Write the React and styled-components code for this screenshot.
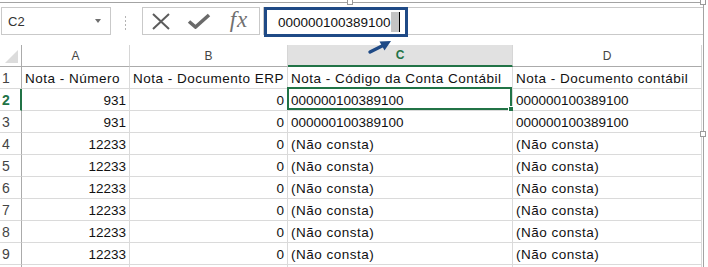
import React from "react";
import styled, { createGlobalStyle, css } from "styled-components";

const GREEN = "#217346";
const BLUE = "#1f4a86";

const Global = createGlobalStyle`
  html, body { margin: 0; padding: 0; background: #fff; overflow: hidden; }
  body { font-family: "Liberation Sans", Arial, sans-serif; }
  * { box-sizing: border-box; }
`;

const Frame = styled.div`
  position: relative;
  margin-top: 2px;
  width: 704px;
  height: 265px;
  border-top: 1px solid #a3a3a3;
  border-right: 1px solid #a3a3a3;
`;

const Handle = styled.span`
  position: absolute;
  z-index: 3;
  width: 6px;
  height: 6px;
  background: #fff;
  border: 1px solid #9a9a9a;
  left: ${(p) => p.$x}px;
  top: ${(p) => p.$y}px;
`;

const Toolbar = styled.div`
  position: relative;
  z-index: 2;
  height: 42px;
  display: flex;
  align-items: flex-start;
  padding: 4px 0 0 1px;
`;

const NameBox = styled.div`
  width: 110px;
  height: 28px;
  border: 1px solid #c9c9c9;
  display: flex;
  align-items: center;
  padding-left: 6px;
  font-size: 13px;
  color: #333;
`;

const NameText = styled.span`
  flex: 1;
`;

const DropArrow = styled.span`
  width: 0;
  height: 0;
  margin-right: 9px;
  border-left: 3.5px solid transparent;
  border-right: 3.5px solid transparent;
  border-top: 4px solid #6f6f6f;
`;

const Dots = styled.span`
  margin: 9px 0 0 14px;
  width: 1px;
  height: 14px;
  background: repeating-linear-gradient(
    to bottom,
    #b4b4b4 0 2px,
    transparent 2px 4px
  );
`;

const FxGroup = styled.div`
  margin-left: 16px;
  width: 118px;
  height: 28px;
  border: 1px solid #c9c9c9;
  display: grid;
  grid-template-columns: 36px 40px 40px;
  align-items: center;
  justify-items: center;
`;

const FxText = styled.span`
  font-family: "Liberation Serif", "Times New Roman", serif;
  font-style: italic;
  font-size: 23px;
  color: #707070;
  letter-spacing: 1px;
  line-height: 26px;
  margin-top: -2px;
`;

const FormulaBar = styled.div`
  position: relative;
  flex: 1;
  margin-left: 3px;
  height: 28px;
  border-top: 1px solid #c9c9c9;
  border-bottom: 1px solid #c9c9c9;
  border-left: 1px solid #c9c9c9;
`;

const Callout = styled.div`
  position: absolute;
  left: 0;
  top: -1px;
  width: 144px;
  height: 30px;
  border: 3px solid ${BLUE};
  background: #fff;
  display: flex;
  align-items: center;
  padding-left: 11px;
  font-size: 13.5px;
  line-height: 15px;
  color: #111;
`;

const SelBlock = styled.span`
  width: 8px;
  height: 20px;
  margin-left: 0;
  background: #c4c4c4;
`;

const Caret = styled.span`
  width: 1px;
  height: 20px;
  background: #000;
`;

const Arrow = styled.svg`
  position: absolute;
  left: 362px;
  top: 33px;
  overflow: visible;
`;

const GridWrap = styled.div`
  position: relative;
  z-index: 1;
  height: 222px;
  overflow: hidden;
`;

const Grid = styled.div`
  display: grid;
  grid-template-columns: 22px 108px 158px 225px 189px;
  grid-auto-rows: 22px;
`;

const ColHead = styled.div`
  position: relative;
  display: flex;
  align-items: center;
  justify-content: center;
  font-size: 12px;
  line-height: 14px;
  color: #444;
  border-right: 1px solid #d6d6d6;
  border-bottom: 1px solid #ababab;
  ${(p) =>
    p.$active &&
    css`
      background: #e1e1e1;
      color: ${GREEN};
      font-weight: bold;
      border-bottom: 2px solid ${GREEN};
    `}
  ${(p) =>
    p.$corner &&
    css`
      border-right: 1px solid #ababab;
    `}
`;

const RowHead = styled.div`
  display: flex;
  align-items: flex-end;
  padding: 0 0 2px 2px;
  font-size: 14px;
  line-height: 15px;
  color: #444;
  border-right: 1px solid #ababab;
  border-bottom: 1px solid #dadada;
  ${(p) =>
    p.$active &&
    css`
      color: ${GREEN};
      font-weight: bold;
      border-right: 2px solid ${GREEN};
    `}
`;

const Cell = styled.div`
  position: relative;
  display: flex;
  align-items: flex-end;
  justify-content: ${(p) => (p.$right ? "flex-end" : "flex-start")};
  padding: 0 ${(p) => (p.$right ? "3px" : "2px")} 2px ${(p) => (p.$right ? "2px" : "3px")};
  font-size: 13.5px;
  line-height: 15px;
  letter-spacing: ${(p) => (p.$digits ? "0" : "0.5px")};
  color: #111;
  white-space: nowrap;
  overflow: visible;
  border-right: 1px solid #dadada;
  border-bottom: 1px solid #dadada;
`;

const Selection = styled.span`
  position: absolute;
  left: -1px;
  top: -2px;
  right: 0;
  bottom: 0;
  border: 2px solid ${GREEN};
  pointer-events: none;
`;

const FillHandle = styled.span`
  position: absolute;
  right: -4px;
  bottom: -4px;
  width: 6px;
  height: 6px;
  background: ${GREEN};
  border: 1px solid #fff;
`;

const CODE = "000000100389100";
const NC = "(Não consta)";

const rows = [
  ["Nota - Número", "Nota - Documento ERP", "Nota - Código da Conta Contábil", "Nota - Documento contábil"],
  [931, 0, CODE, CODE],
  [931, 0, CODE, CODE],
  [12233, 0, NC, NC],
  [12233, 0, NC, NC],
  [12233, 0, NC, NC],
  [12233, 0, NC, NC],
  [12233, 0, NC, NC],
  [12233, 0, NC, NC],
];

const cols = ["A", "B", "C", "D"];

export default function App() {
  return (
    <>
      <Global />
      <Frame>
        <Handle $x={347} $y={-4} />
        <Handle $x={700} $y={-4} />
        <Handle $x={700} $y={128} />
        <Toolbar>
          <NameBox>
            <NameText>C2</NameText>
            <DropArrow />
          </NameBox>
          <Dots />
          <FxGroup>
            <svg width="20" height="17" viewBox="0 0 20 17">
              <path d="M2 1 L18 16 M18 1 L2 16" stroke="#5c5c5c" strokeWidth="2" fill="none" />
            </svg>
            <svg width="24" height="16" viewBox="0 0 24 16">
              <path d="M2 8.5 L8.5 14 L22 2" stroke="#6a6a6a" strokeWidth="3.6" fill="none" strokeLinejoin="miter" />
            </svg>
            <FxText>fx</FxText>
          </FxGroup>
          <FormulaBar>
            <Callout>
              <span>{CODE}</span>
              <SelBlock />
              <Caret />
            </Callout>
          </FormulaBar>
          <Arrow width="34" height="22" viewBox="0 0 34 22">
            <path d="M8 16 L21 9.5" stroke={BLUE} strokeWidth="3.4" strokeLinecap="round" fill="none" />
            <polygon points="29,5 17.5,5.5 22.5,14.5" fill={BLUE} />
          </Arrow>
        </Toolbar>
        <GridWrap>
          <Grid>
            <ColHead $corner>
              <svg width="22" height="21" viewBox="0 0 22 21" style={{ position: "absolute", left: 0, top: 0 }}>
                <polygon points="5,18 18,18 18,5" fill="#dcdcdc" />
              </svg>
            </ColHead>
            {cols.map((c) => (
              <ColHead key={c} $active={c === "C"}>
                {c}
              </ColHead>
            ))}
            {rows.map((r, i) => (
              <React.Fragment key={i}>
                <RowHead $active={i === 1}>{i + 1}</RowHead>
                {r.map((v, j) => {
                  const isNum = typeof v === "number";
                  const digits = isNum || /^\d+$/.test(String(v));
                  return (
                    <Cell key={j} $right={isNum} $digits={digits}>
                      {String(v)}
                      {i === 1 && j === 2 && (
                        <Selection>
                          <FillHandle />
                        </Selection>
                      )}
                    </Cell>
                  );
                })}
              </React.Fragment>
            ))}
            <RowHead />
            {cols.map((c) => (
              <Cell key={c} />
            ))}
          </Grid>
        </GridWrap>
      </Frame>
    </>
  );
}
